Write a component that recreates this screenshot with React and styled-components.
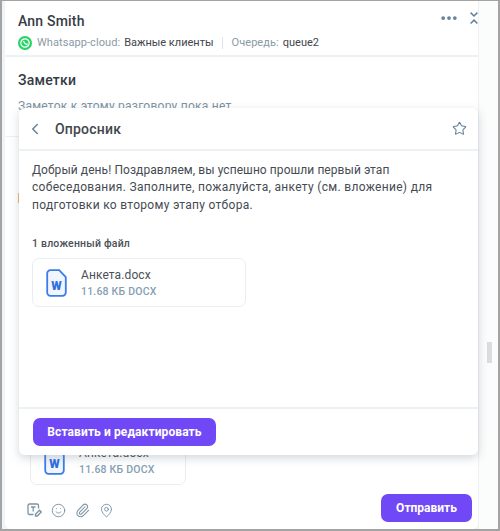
import styled, { createGlobalStyle } from "styled-components";
import { ChevronLeft, Star, Smile, Paperclip, MapPin, Ellipsis } from "lucide-react";

const Global = createGlobalStyle`
  html, body {
    margin: 0;
    padding: 0;
    background: #fff;
  }
  * {
    box-sizing: border-box;
  }
`;

const WordIcon = () => (
  <svg width="21" height="28" viewBox="0 0 21 28" fill="none">
    <path
      d="M4.5 1.2h8.7l6.6 7V23.500a3.300 3.300 0 0 1-3.300 3.300H4.500a3.300 3.300 0 0 1-3.300-3.300V4.500a3.300 3.300 0 0 1 3.300-3.300Z"
      fill="#f1f6fe"
      stroke="#3b7de8"
      strokeWidth="1.8"
    />
    <text
      x="10.500"
      y="21"
      textAnchor="middle"
      fontFamily="Roboto, sans-serif"
      fontSize="12"
      fontWeight="900"
      fill="#2f6fe0"
    >
      W
    </text>
  </svg>
);

const WhatsappIcon = () => (
  <svg width="14" height="14" viewBox="0 0 14 14">
    <circle cx="7" cy="7" r="7" fill="#25d366" />
    <circle cx="7" cy="7" r="4.200" fill="none" stroke="#fff" strokeWidth="1.200" />
    <path d="M5.400 5c.8 2 1.600 2.900 3.400 3.600l.6-.9" fill="none" stroke="#fff" strokeWidth="1.200" />
  </svg>
);

const ExpandIcon = () => (
  <svg width="8" height="13" viewBox="0 0 8 13" fill="none" stroke="#64809a" strokeWidth="1.500">
    <path d="M.6.6L4 4l3.400-3.400" />
    <path d="M.6 11.500L4 8.100l3.400 3.400" />
  </svg>
);

const TemplateIcon = () => (
  <svg width="15" height="14" viewBox="0 0 15 14" fill="none" stroke="#7d93a3" strokeWidth="1.300">
    <path d="M6.500 11.500H2.500A1.500 1.500 0 0 1 1 10V2.500A1.500 1.500 0 0 1 2.500 1h7.500a1.500 1.500 0 0 1 1.500 1.500v3" />
    <path d="M4 4h4.500M6.200 4v4.500" />
    <path d="M8.500 13v-1.800l4-4 1.800 1.800-4 4z" />
  </svg>
);

const App = () => (
  <>
    <Global />
    <Frame>
      <Panel>
        <Header>
          <HeaderTop>
            <Name>Ann Smith</Name>
            <HeaderActions>
              <Ellipsis size={20} color="#64809a" strokeWidth={2.5} />
              <ExpandIcon />
            </HeaderActions>
          </HeaderTop>
          <Meta>
            <WhatsappIcon />
            <MetaLabel>Whatsapp-cloud:</MetaLabel>
            <MetaValue>Важные клиенты</MetaValue>
            <MetaDivider />
            <MetaLabel>Очередь:</MetaLabel>
            <MetaValue>queue2</MetaValue>
          </Meta>
        </Header>
        <Notes>
          <NotesTitle>Заметки</NotesTitle>
          <NotesEmpty>Заметок к этому разговору пока нет</NotesEmpty>
        </Notes>
        <Composer>
          <FileCard $compact>
            <WordIcon />
            <FileInfo>
              <FileName>Анкета.docx</FileName>
              <FileSize>11.68 КБ DOCX</FileSize>
            </FileInfo>
          </FileCard>
          <ComposerBar>
            <ComposerTools>
              <TemplateIcon />
              <Smile size={15} color="#7d93a3" strokeWidth={1.5} />
              <Paperclip size={15} color="#7d93a3" strokeWidth={1.7} />
              <MapPin size={15} color="#7d93a3" strokeWidth={1.5} />
            </ComposerTools>
            <SendButton>Отправить</SendButton>
          </ComposerBar>
        </Composer>
      </Panel>
      <Rail>
        <RailThumb />
      </Rail>
      <OrangeMark />
      <Popup>
        <PopupHeader>
          <PopupTitleRow>
            <ChevronLeft size={18} color="#64809a" strokeWidth={2} />
            <PopupTitle>Опросник</PopupTitle>
          </PopupTitleRow>
          <Star size={15} color="#64809a" strokeWidth={1.7} />
        </PopupHeader>
        <PopupBody>
          <Message>
            <MessageLine $tracking={0.07}>Добрый день! Поздравляем, вы успешно прошли первый этап</MessageLine>
            <MessageLine $tracking={0.31}>собеседования. Заполните, пожалуйста, анкету (см. вложение) для</MessageLine>
            <MessageLine $tracking={0.3}>подготовки ко второму этапу отбора.</MessageLine>
          </Message>
          <AttachLabel>1 вложенный файл</AttachLabel>
          <FileCard>
            <WordIcon />
            <FileInfo>
              <FileName>Анкета.docx</FileName>
              <FileSize>11.68 КБ DOCX</FileSize>
            </FileInfo>
          </FileCard>
        </PopupBody>
        <PopupFooter>
          <InsertButton>Вставить и редактировать</InsertButton>
        </PopupFooter>
      </Popup>
    </Frame>
  </>
);

export default App;

const Frame = styled.div`
  position: relative;
  width: 500px;
  height: 531px;
  display: flex;
  background: #f1f4f6;
  border-top: 1px solid #a3a3a3;
  border-bottom: 2px solid #a3a3a3;
  border-left: 2px solid #a3a3a3;
  border-right: 2px solid #a3a3a3;
  font-family: Roboto, "Liberation Sans", sans-serif;
  overflow: hidden;
`;

const Panel = styled.div`
  width: 474px;
  margin-left: 3px;
  background: #fff;
  display: flex;
  flex-direction: column;
  border-right: 1px solid #eef1f3;
  border-radius: 0 0 6px 6px;
`;

const Rail = styled.div`
  flex: 1;
  padding: 341px 0 0 8px;
  background: #fbfcfc;
`;

const RailThumb = styled.div`
  width: 5px;
  height: 21px;
  background: #dcdcdc;
`;

const Header = styled.header`
  height: 56px;
  padding: 12px 0 0 13px;
  border-bottom: 2px solid #edf1f2;
`;

const HeaderTop = styled.div`
  display: flex;
  justify-content: space-between;
  align-items: flex-start;
`;

const Name = styled.div`
  font-size: 14px;
  line-height: 17px;
  font-weight: 500;
  color: #363c44;
  letter-spacing: 0.2px;
`;

const HeaderActions = styled.div`
  display: flex;
  align-items: center;
  gap: 11px;
  margin-top: -5px;
`;

const Meta = styled.div`
  display: flex;
  align-items: center;
  margin-top: 6px;
  font-size: 11px;
  line-height: 14px;
`;

const MetaLabel = styled.span`
  color: #8a9aa6;
  margin-left: 5px;
  letter-spacing: 0.07px;
`;

const MetaValue = styled.span`
  color: #3f454c;
  margin-left: 4px;
`;

const MetaDivider = styled.span`
  width: 1px;
  height: 12px;
  background: #dde3e6;
  margin: 0 4px 0 8px;
`;

const Notes = styled.section`
  height: 80px;
  padding: 14px 13px 0 13px;
  border-bottom: 1px solid #edf1f2;
`;

const NotesTitle = styled.h2`
  margin: 0;
  font-size: 14px;
  line-height: 18px;
  font-weight: 500;
  color: #363c44;
  letter-spacing: 0.2px;
`;

const NotesEmpty = styled.div`
  margin-top: 9px;
  font-size: 12px;
  line-height: 16px;
  color: #7d93a3;
  letter-spacing: 0.25px;
`;

const Composer = styled.div`
  flex: 1;
  display: flex;
  flex-direction: column;
  justify-content: flex-end;
  padding: 0 6px 7px 25px;
`;

const ComposerBar = styled.div`
  display: flex;
  align-items: center;
  justify-content: space-between;
  margin-top: 9px;
`;

const ComposerTools = styled.div`
  display: flex;
  align-items: center;
  gap: 9px;
  margin: 4px 0 0 -3px;
`;

const SendButton = styled.button`
  width: 91px;
  height: 28px;
  border: 0;
  border-radius: 7px;
  background: #7148f5;
  color: #fff;
  font-family: inherit;
  font-size: 12px;
  font-weight: 700;
`;

const OrangeMark = styled.div`
  position: absolute;
  left: 16px;
  top: 192px;
  width: 2px;
  height: 10px;
  background: #f5b46a;
`;

const Popup = styled.div`
  position: absolute;
  left: 17px;
  top: 107px;
  width: 459px;
  height: 347px;
  display: flex;
  flex-direction: column;
  background: #fff;
  border-radius: 6px;
  box-shadow: 0 3px 10px rgba(90, 110, 125, 0.28);
`;

const PopupHeader = styled.div`
  height: 43px;
  padding: 0 11px 0 6.5px;
  display: flex;
  align-items: center;
  justify-content: space-between;
  border-bottom: 2px solid #edf1f2;
`;

const PopupTitleRow = styled.div`
  display: flex;
  align-items: center;
  gap: 11.5px;
`;

const PopupTitle = styled.div`
  font-size: 14px;
  font-weight: 500;
  color: #41474e;
  letter-spacing: 0.2px;
`;

const PopupBody = styled.div`
  flex: 1;
  padding: 10.5px 13px 0 13px;
`;

const Message = styled.div`
  font-size: 12px;
  line-height: 17.5px;
  color: #454b52;
`;

const MessageLine = styled.p`
  margin: 0;
  white-space: nowrap;
  letter-spacing: ${(p) => p.$tracking}px;
`;

const AttachLabel = styled.div`
  margin-top: 23px;
  font-size: 10.5px;
  line-height: 14px;
  font-weight: 500;
  color: #4a5057;
  letter-spacing: 0.2px;
`;

const FileCard = styled.div`
  width: ${(p) => (p.$compact ? "156px" : "214px")};
  height: 49px;
  margin-top: ${(p) => (p.$compact ? "0" : "7px")};
  padding: 0 13px;
  display: flex;
  align-items: center;
  gap: 14px;
  background: #fff;
  border: 1px solid #e8eef0;
  border-radius: 7px;
`;

const FileInfo = styled.div`
  display: flex;
  flex-direction: column;
`;

const FileName = styled.div`
  font-size: 12px;
  line-height: 15px;
  color: #4a5057;
  letter-spacing: 0.1px;
`;

const FileSize = styled.div`
  margin-top: 2px;
  font-size: 10.5px;
  line-height: 13px;
  font-weight: 500;
  color: #84a0b3;
  letter-spacing: 0.2px;
`;

const PopupFooter = styled.div`
  height: 48px;
  padding: 9px 14px 0 14px;
  border-top: 2px solid #edf1f2;
`;

const InsertButton = styled.button`
  width: 183px;
  height: 28px;
  border: 0;
  border-radius: 7px;
  background: #7148f5;
  color: #fff;
  font-family: inherit;
  font-size: 12px;
  font-weight: 700;
  letter-spacing: 0.1px;
`;
